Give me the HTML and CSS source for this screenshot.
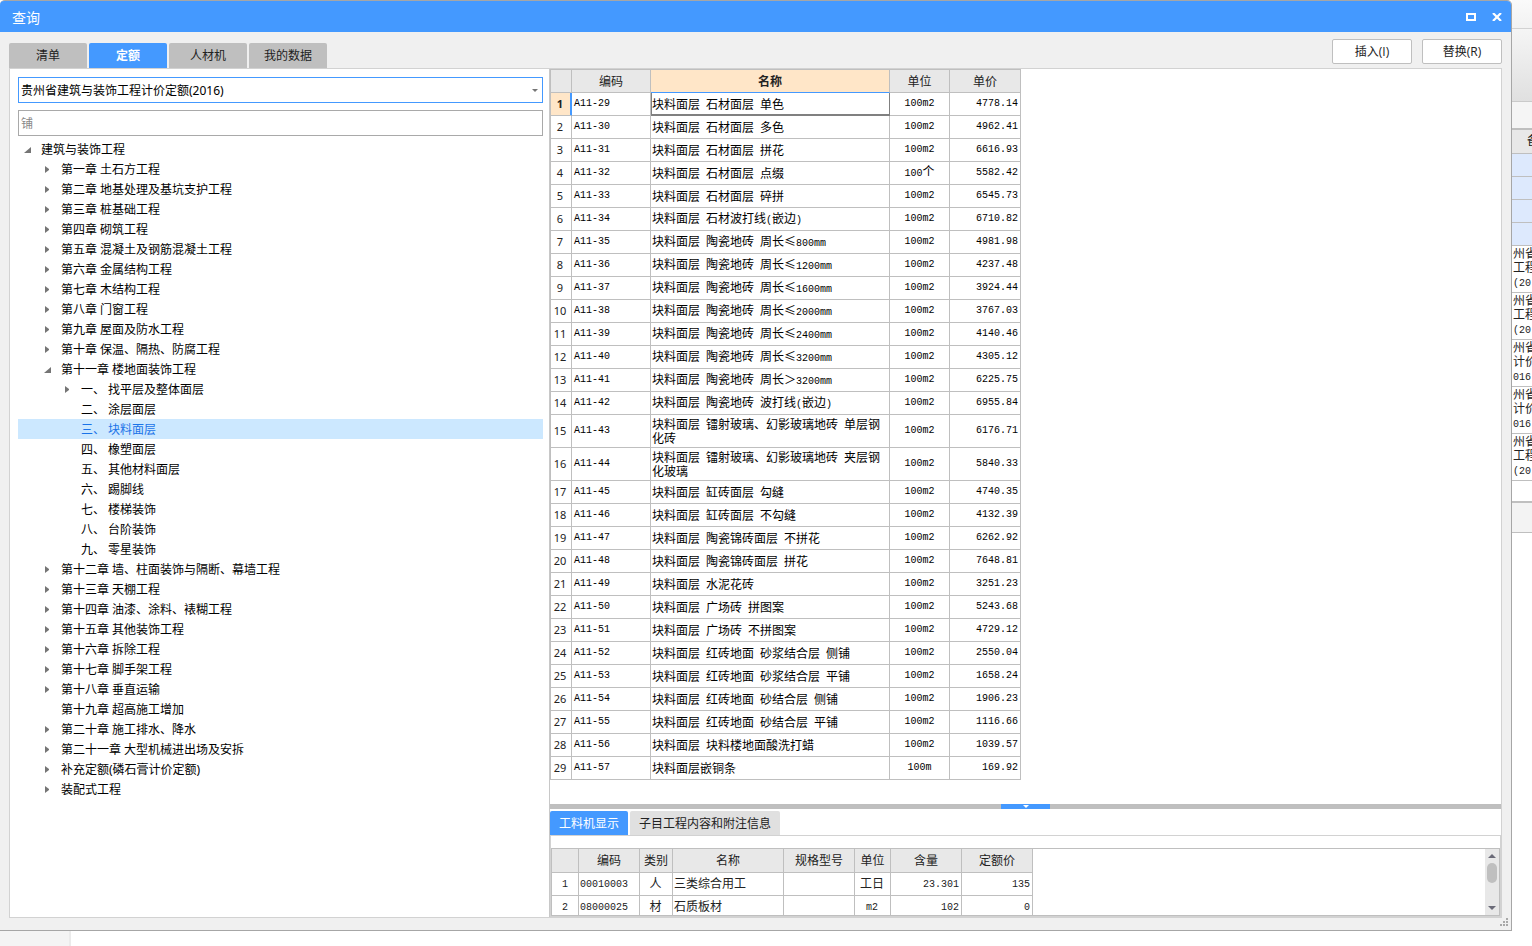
FILE: index.html
```
<!DOCTYPE html>
<html lang="zh-CN">
<head>
<meta charset="utf-8">
<title>查询</title>
<link rel="stylesheet" href="styles.css">
</head>
<body>
<div class="screen">
  <main class="dialog">
    <header class="titlebar">
      <h1>查询</h1>
      <button class="win-btn" type="button" aria-label="最大化"><svg width="10" height="8" viewBox="0 0 10 8" shape-rendering="crispEdges"><path d="M0 0H10V8H0ZM2 2V6H8V2Z" fill="#fff" fill-rule="evenodd"/></svg></button>
      <button class="win-btn" type="button" aria-label="关闭"><svg width="10" height="8" viewBox="0 0 10 8"><path d="M1 0L9 8M9 0L1 8" stroke="#fff" stroke-width="2.2"/></svg></button>
    </header>
    <div class="toolbar">
      <nav class="tabs">
        <button type="button" class="tab">清单</button>
        <button type="button" class="tab active">定额</button>
        <button type="button" class="tab">人材机</button>
        <button type="button" class="tab">我的数据</button>
      </nav>
      <div class="actions">
        <button type="button" class="btn">插入(I)</button>
        <button type="button" class="btn">替换(R)</button>
      </div>
    </div>
    <div class="panel">
      <aside class="side">
        <div class="combo">
          <select aria-label="定额库"><option>贵州省建筑与装饰工程计价定额(2016)</option></select>
          <svg class="combo-arrow" width="6" height="3" viewBox="0 0 6 3"><path d="M0 0H6L3 3Z" fill="#767676"/></svg>
        </div>
        <input class="search" type="text" placeholder="铺" aria-label="搜索">
        <ul class="tree">
          <li class="l1 open">建筑与装饰工程</li>
          <li class="l2 closed">第一章 土石方工程</li>
          <li class="l2 closed">第二章 地基处理及基坑支护工程</li>
          <li class="l2 closed">第三章 桩基础工程</li>
          <li class="l2 closed">第四章 砌筑工程</li>
          <li class="l2 closed">第五章 混凝土及钢筋混凝土工程</li>
          <li class="l2 closed">第六章 金属结构工程</li>
          <li class="l2 closed">第七章 木结构工程</li>
          <li class="l2 closed">第八章 门窗工程</li>
          <li class="l2 closed">第九章 屋面及防水工程</li>
          <li class="l2 closed">第十章 保温、隔热、防腐工程</li>
          <li class="l2 open">第十一章 楼地面装饰工程</li>
          <li class="l3 closed">一、 找平层及整体面层</li>
          <li class="l3">二、 涂层面层</li>
          <li class="l3 selected">三、 块料面层</li>
          <li class="l3">四、 橡塑面层</li>
          <li class="l3">五、 其他材料面层</li>
          <li class="l3">六、 踢脚线</li>
          <li class="l3">七、 楼梯装饰</li>
          <li class="l3">八、 台阶装饰</li>
          <li class="l3">九、 零星装饰</li>
          <li class="l2 closed">第十二章 墙、柱面装饰与隔断、幕墙工程</li>
          <li class="l2 closed">第十三章 天棚工程</li>
          <li class="l2 closed">第十四章 油漆、涂料、裱糊工程</li>
          <li class="l2 closed">第十五章 其他装饰工程</li>
          <li class="l2 closed">第十六章 拆除工程</li>
          <li class="l2 closed">第十七章 脚手架工程</li>
          <li class="l2 closed">第十八章 垂直运输</li>
          <li class="l2">第十九章 超高施工增加</li>
          <li class="l2 closed">第二十章 施工排水、降水</li>
          <li class="l2 closed">第二十一章 大型机械进出场及安拆</li>
          <li class="l2 closed">补充定额(磷石膏计价定额)</li>
          <li class="l2 closed">装配式工程</li>
        </ul>
      </aside>
      <section class="content">
        <div class="quota">
          <table class="grid quota-grid">
            <colgroup><col class="c-no"><col class="c-code"><col class="c-name"><col class="c-unit"><col class="c-price"></colgroup>
            <thead><tr><th></th><th>编码</th><th class="current">名称</th><th>单位</th><th>单价</th></tr></thead>
            <tbody>
              <tr class="current"><th>1</th><td>A11-29</td><td>块料面层&ensp;石材面层&ensp;单色</td><td>100m2</td><td>4778.14</td></tr>
              <tr><th>2</th><td>A11-30</td><td>块料面层&ensp;石材面层&ensp;多色</td><td>100m2</td><td>4962.41</td></tr>
              <tr><th>3</th><td>A11-31</td><td>块料面层&ensp;石材面层&ensp;拼花</td><td>100m2</td><td>6616.93</td></tr>
              <tr><th>4</th><td>A11-32</td><td>块料面层&ensp;石材面层&ensp;点缀</td><td>100<span class="han">个</span></td><td>5582.42</td></tr>
              <tr><th>5</th><td>A11-33</td><td>块料面层&ensp;石材面层&ensp;碎拼</td><td>100m2</td><td>6545.73</td></tr>
              <tr><th>6</th><td>A11-34</td><td>块料面层&ensp;石材波打线<span class="num">(</span>嵌边<span class="num">)</span></td><td>100m2</td><td>6710.82</td></tr>
              <tr><th>7</th><td>A11-35</td><td>块料面层&ensp;陶瓷地砖&ensp;周长≤<span class="num">800mm</span></td><td>100m2</td><td>4981.98</td></tr>
              <tr><th>8</th><td>A11-36</td><td>块料面层&ensp;陶瓷地砖&ensp;周长≤<span class="num">1200mm</span></td><td>100m2</td><td>4237.48</td></tr>
              <tr><th>9</th><td>A11-37</td><td>块料面层&ensp;陶瓷地砖&ensp;周长≤<span class="num">1600mm</span></td><td>100m2</td><td>3924.44</td></tr>
              <tr><th>10</th><td>A11-38</td><td>块料面层&ensp;陶瓷地砖&ensp;周长≤<span class="num">2000mm</span></td><td>100m2</td><td>3767.03</td></tr>
              <tr><th>11</th><td>A11-39</td><td>块料面层&ensp;陶瓷地砖&ensp;周长≤<span class="num">2400mm</span></td><td>100m2</td><td>4140.46</td></tr>
              <tr><th>12</th><td>A11-40</td><td>块料面层&ensp;陶瓷地砖&ensp;周长≤<span class="num">3200mm</span></td><td>100m2</td><td>4305.12</td></tr>
              <tr><th>13</th><td>A11-41</td><td>块料面层&ensp;陶瓷地砖&ensp;周长＞<span class="num">3200mm</span></td><td>100m2</td><td>6225.75</td></tr>
              <tr><th>14</th><td>A11-42</td><td>块料面层&ensp;陶瓷地砖&ensp;波打线<span class="num">(</span>嵌边<span class="num">)</span></td><td>100m2</td><td>6955.84</td></tr>
              <tr class="tall"><th>15</th><td>A11-43</td><td>块料面层&ensp;镭射玻璃、幻影玻璃地砖&ensp;单层钢化砖</td><td>100m2</td><td>6176.71</td></tr>
              <tr class="tall"><th>16</th><td>A11-44</td><td>块料面层&ensp;镭射玻璃、幻影玻璃地砖&ensp;夹层钢化玻璃</td><td>100m2</td><td>5840.33</td></tr>
              <tr><th>17</th><td>A11-45</td><td>块料面层&ensp;缸砖面层&ensp;勾缝</td><td>100m2</td><td>4740.35</td></tr>
              <tr><th>18</th><td>A11-46</td><td>块料面层&ensp;缸砖面层&ensp;不勾缝</td><td>100m2</td><td>4132.39</td></tr>
              <tr><th>19</th><td>A11-47</td><td>块料面层&ensp;陶瓷锦砖面层&ensp;不拼花</td><td>100m2</td><td>6262.92</td></tr>
              <tr><th>20</th><td>A11-48</td><td>块料面层&ensp;陶瓷锦砖面层&ensp;拼花</td><td>100m2</td><td>7648.81</td></tr>
              <tr><th>21</th><td>A11-49</td><td>块料面层&ensp;水泥花砖</td><td>100m2</td><td>3251.23</td></tr>
              <tr><th>22</th><td>A11-50</td><td>块料面层&ensp;广场砖&ensp;拼图案</td><td>100m2</td><td>5243.68</td></tr>
              <tr><th>23</th><td>A11-51</td><td>块料面层&ensp;广场砖&ensp;不拼图案</td><td>100m2</td><td>4729.12</td></tr>
              <tr><th>24</th><td>A11-52</td><td>块料面层&ensp;红砖地面&ensp;砂浆结合层&ensp;侧铺</td><td>100m2</td><td>2550.04</td></tr>
              <tr><th>25</th><td>A11-53</td><td>块料面层&ensp;红砖地面&ensp;砂浆结合层&ensp;平铺</td><td>100m2</td><td>1658.24</td></tr>
              <tr><th>26</th><td>A11-54</td><td>块料面层&ensp;红砖地面&ensp;砂结合层&ensp;侧铺</td><td>100m2</td><td>1906.23</td></tr>
              <tr><th>27</th><td>A11-55</td><td>块料面层&ensp;红砖地面&ensp;砂结合层&ensp;平铺</td><td>100m2</td><td>1116.66</td></tr>
              <tr><th>28</th><td>A11-56</td><td>块料面层&ensp;块料楼地面酸洗打蜡</td><td>100m2</td><td>1039.57</td></tr>
              <tr><th>29</th><td>A11-57</td><td>块料面层嵌铜条</td><td>100m</td><td>169.92</td></tr>
            </tbody>
          </table>
        </div>
        <div class="splitter"><button type="button" class="splitter-grip" aria-label="折叠"><svg width="6" height="3" viewBox="0 0 6 3"><path d="M0 0H6L3 3Z" fill="#fff"/></svg></button></div>
        <nav class="subtabs">
          <button type="button" class="subtab active">工料机显示</button>
          <button type="button" class="subtab">子目工程内容和附注信息</button>
        </nav>
        <div class="detail">
          <div class="detail-frame">
            <div class="detail-scroll">
              <table class="grid detail-grid">
                <colgroup><col class="d-no"><col class="d-code"><col class="d-kind"><col class="d-name"><col class="d-spec"><col class="d-unit"><col class="d-qty"><col class="d-price"></colgroup>
                <thead><tr><th></th><th>编码</th><th>类别</th><th>名称</th><th>规格型号</th><th>单位</th><th>含量</th><th>定额价</th></tr></thead>
                <tbody>
                  <tr><th>1</th><td class="num">00010003</td><td class="mid">人</td><td>三类综合用工</td><td></td><td class="mid">工日</td><td class="num end">23.301</td><td class="num end">135</td></tr>
                  <tr><th>2</th><td class="num">08000025</td><td class="mid">材</td><td>石质板材</td><td></td><td class="num mid">m2</td><td class="num end">102</td><td class="num end">0</td></tr>
                </tbody>
              </table>
            </div>
            <div class="scrollbar">
              <svg width="8" height="4" viewBox="0 0 8 4"><path d="M0 4L4 0L8 4Z" fill="#6b6b78"/></svg>
              <div class="thumb"></div>
              <svg class="down" width="8" height="4" viewBox="0 0 8 4"><path d="M0 0L4 4L8 0Z" fill="#6b6b78"/></svg>
            </div>
          </div>
        </div>
      </section>
    </div>
    <footer class="statusbar"><svg width="8" height="8" viewBox="0 0 8 8" shape-rendering="crispEdges"><path d="M6 0h2v2h-2zM3 3h2v2h-2zM6 3h2v2h-2zM0 6h2v2h-2zM3 6h2v2h-2zM6 6h2v2h-2z" fill="#a8a8a8"/></svg></footer>
  </main>
  <div class="behind-right">
    <div class="b-top"></div>
    <div class="b-ribbon"></div>
    <div class="b-bar"></div>
    <div class="b-head">备</div>
    <div class="b-blue"></div><div class="b-blue"></div><div class="b-blue"></div><div class="b-blue"></div>
    <div class="b-cell">州省<br>工程<br><span class="num">(20</span></div>
    <div class="b-cell">州省<br>工程<br><span class="num">(20</span></div>
    <div class="b-cell">州省<br>计价<br><span class="num">016</span></div>
    <div class="b-cell">州省<br>计价<br><span class="num">016</span></div>
    <div class="b-cell">州省<br>工程<br><span class="num">(20</span></div>
    <div class="b-gap"></div>
    <div class="b-foot"></div>
  </div>
  <div class="behind-bottom"><div class="b-side"></div></div>
</div>
</body>
</html>
```
FILE: styles.css
```
* { box-sizing: border-box; }
body {
  margin: 0;
  background: #fff;
  color: #000;
  font-family: "Noto Sans", "Noto Sans CJK SC", sans-serif;
  font-size: 12px;
}
button, input, select { font: inherit; color: inherit; padding: 0; border: 0; margin: 0; }
svg { display: block; }

.screen {
  display: grid;
  grid-template-columns: minmax(0, 1fr) 20px;
  grid-template-rows: minmax(0, 1fr) 15px;
  height: 100vh;
  overflow: hidden;
}

/* dialog frame */
.dialog {
  display: flex;
  flex-direction: column;
  min-height: 0;
  background: #f0f0f0;
  border: 1px solid #a6a6a6;
  border-left: 0;
  border-radius: 5px 5px 0 0;
}
.titlebar {
  display: flex;
  align-items: center;
  height: 31px;
  flex: none;
  padding: 0 1px 0 12px;
  background: #4499ff;
  border-radius: 4px 4px 0 0;
  color: #fff;
}
.titlebar h1 { flex: 1; margin: 0; padding-top: 2px; font-size: 14px; font-weight: 400; line-height: 20px; }
.win-btn { display: grid; place-items: center; width: 26px; height: 24px; background: none; }

.toolbar {
  display: flex;
  justify-content: space-between;
  align-items: flex-end;
  flex: none;
  height: 36px;
  padding: 0 9px;
}
.tabs { display: flex; gap: 2px; }
.tab { width: 78px; height: 25px; padding-bottom: 1px; background: #bfbfbf; color: #222; border-radius: 2px 2px 0 0; }
.tab.active { background: #4499ff; color: #fff; font-weight: 700; }
.actions { display: flex; gap: 10px; padding-bottom: 4px; }
.btn { width: 80px; height: 25px; padding-bottom: 1px; background: #fff; border: 1px solid #bfbfbf; border-radius: 2px; color: #222; font-family: "Open Sans", "Noto Sans CJK SC", sans-serif; }

.panel {
  display: flex;
  flex: 1;
  min-height: 0;
  margin: 0 9px;
  border: 1px solid #d2d2d2;
  background: #fff;
}

/* left pane */
.side {
  flex: none;
  width: 540px;
  padding: 8px 6px 0 8px;
  border-right: 1px solid #c8c8c8;
  overflow: hidden;
}
.combo { display: grid; align-items: center; margin-bottom: 7px; }
.combo select {
  grid-area: 1 / 1;
  width: 100%;
  height: 26px;
  padding: 0 2px;
  appearance: none;
  background: #fff;
  border: 1px solid #4499ff;
}
.combo-arrow { grid-area: 1 / 1; justify-self: end; margin-right: 5px; pointer-events: none; }
.search { display: block; width: 100%; height: 26px; padding: 0 2px; border: 1px solid #a9a9a9; }
.search::placeholder { color: #888; opacity: 1; }

.tree { list-style: none; margin: 3px 0 0; padding: 0; }
.tree li { display: flex; align-items: center; height: 20px; line-height: 22px; white-space: pre; }
.tree li::before { content: ""; width: 7px; height: 9px; margin-right: 10px; }
.tree .closed::before { background: #757575; clip-path: polygon(1px 1px, 5px 4px, 5px 5px, 1px 8px); }
.tree .open::before { background: #757575; clip-path: polygon(7px 2px, 7px 8px, 0 8px); }
.tree li { padding-top: 1px; }
.l1 { padding-left: 6px; }
.l2 { padding-left: 26px; }
.l3 { padding-left: 46px; }
.tree .selected { background: #cce8ff; color: #1a73e8; }

/* right pane */
.content { display: flex; flex: 1; flex-direction: column; min-width: 0; }
.quota { flex: 1; min-height: 0; overflow: hidden; }

.grid {
  table-layout: fixed;
  border-collapse: separate;
  border-spacing: 0;
  border-left: 1px solid #bfbfbf;
  border-top: 1px solid #bfbfbf;
  font-family: "Liberation Mono", "Noto Sans CJK SC", monospace;
  line-height: 14px;
}
.grid th, .grid td {
  height: 23px;
  padding: 0 2px;
  border-right: 1px solid #bfbfbf;
  border-bottom: 1px solid #bfbfbf;
  text-align: left;
}
.grid th { padding: 0; text-align: center; font-weight: 400; color: #222; }
.grid thead th { padding-top: 3px; background: #e8e8e8; }
.num { font-family: "Liberation Mono", monospace; font-size: 10px; }
.han { font-family: "Noto Sans CJK SC", sans-serif; font-size: 12px; line-height: 12px; }

.quota-grid { width: 471px; }
.c-no { width: 21px; }
.c-code { width: 79px; }
.c-name { width: 239px; }
.c-unit { width: 60px; }
.c-price { width: 71px; }
.quota-grid tbody th { padding-right: 2px; font-family: "Noto Sans", sans-serif; font-size: 11px; }
.quota-grid td:nth-child(2), .quota-grid td:nth-child(4), .quota-grid td:nth-child(5) { font-size: 10px; }
.quota-grid td:nth-child(3) { padding: 0 1px; font-family: "Noto Sans CJK SC", sans-serif; }
.quota-grid td:nth-child(4) { text-align: center; }
.quota-grid td:nth-child(5) { text-align: right; }
.quota-grid .tall td, .quota-grid .tall th { height: 33px; }
.quota-grid thead .current { background: #ffe6c8; border-bottom-color: #4499ff; font-weight: 700; }
.quota-grid tbody .current th { background: #ffe6c8; font-weight: 700; box-shadow: inset -1px 0 #4499ff; border-right-color: #4499ff; }
.quota-grid tbody .current td:nth-child(3) {
  border-color: #808080;
  box-shadow: inset 1px 0 #808080, inset 0 -1px #808080;
}

.splitter { display: flex; justify-content: center; flex: none; height: 5px; background: #bfbfbf; }
.splitter-grip { display: grid; place-items: center; width: 49px; height: 5px; background: #4499ff; }

.subtabs { display: flex; gap: 2px; flex: none; padding-top: 2px; border-bottom: 1px solid #d2d2d2; }
.subtab { height: 24px; padding: 0 9px; background: #e0e0e0; color: #222; border-radius: 2px 2px 0 0; }
.subtab.active { background: #4499ff; color: #fff; }

.detail { flex: none; padding-top: 12px; border: solid #d2d2d2; border-width: 0 1px 1px; }
.detail-frame { display: flex; height: 68px; border: solid #bfbfbf; border-width: 1px 1px 1px 0; }
.detail-scroll { flex: 1; min-width: 0; overflow: hidden; }
.detail-grid { width: 482px; border-top: 0; }
.d-no { width: 27px; }
.d-code { width: 61px; }
.d-kind { width: 33px; }
.d-name { width: 111px; }
.d-spec { width: 71px; }
.d-unit { width: 36px; }
.d-qty { width: 71px; }
.d-price { width: 71px; }
.detail-grid thead th { height: 24px; }
.detail-grid tbody th { padding-top: 2px; font-size: 10px; }
.detail-grid td { padding: 1px 2px 0 1px; color: #222; }
.detail-grid .mid { text-align: center; }
.detail-grid .end { text-align: right; }

.scrollbar {
  display: flex;
  flex-direction: column;
  align-items: center;
  flex: none;
  width: 14px;
  padding: 5px 0;
  background: #e8e8e8;
}
.thumb { width: 10px; height: 20px; margin-top: 5px; border-radius: 5px; background: #bfbfbf; }
.down { margin-top: auto; }

.statusbar { display: flex; flex: none; justify-content: flex-end; height: 12px; padding-right: 3px; }

/* window behind the dialog */
.behind-right {
  grid-row: 1 / 3;
  grid-column: 2;
  overflow: hidden;
  font-family: "Liberation Mono", "Noto Sans CJK SC", monospace;
  line-height: 14px;
  color: #222;
  white-space: nowrap;
}
.b-top { height: 29px; background: linear-gradient(#fafafa, #f2f2f2); border-bottom: 1px solid #d2d2d2; }
.b-ribbon { height: 73px; background: linear-gradient(#f5f5f5, #e0e0e0); border-bottom: 1px solid #cacaca; }
.b-bar { height: 28px; background: #f5f5f5; border-bottom: 2px solid #bfbfbf; }
.b-head { height: 24px; padding-left: 15px; background: #e8e8e8; border-bottom: 1px solid #bfbfbf; line-height: 24px; }
.b-blue { height: 23px; background: #dde9fd; border-bottom: 1px solid #bfbfbf; }
.b-cell { height: 47px; padding: 2px 1px; border-bottom: 1px solid #bfbfbf; }
.b-gap { height: 22px; border-bottom: 2px solid #bfbfbf; }
.b-foot { height: 30px; background: #f3f3f3; border-bottom: 1px solid #bfbfbf; }
.behind-bottom { grid-row: 2; grid-column: 1; }
.b-side { width: 71px; height: 100%; background: #f4f4f4; border-right: 2px solid #ebebeb; }
```
